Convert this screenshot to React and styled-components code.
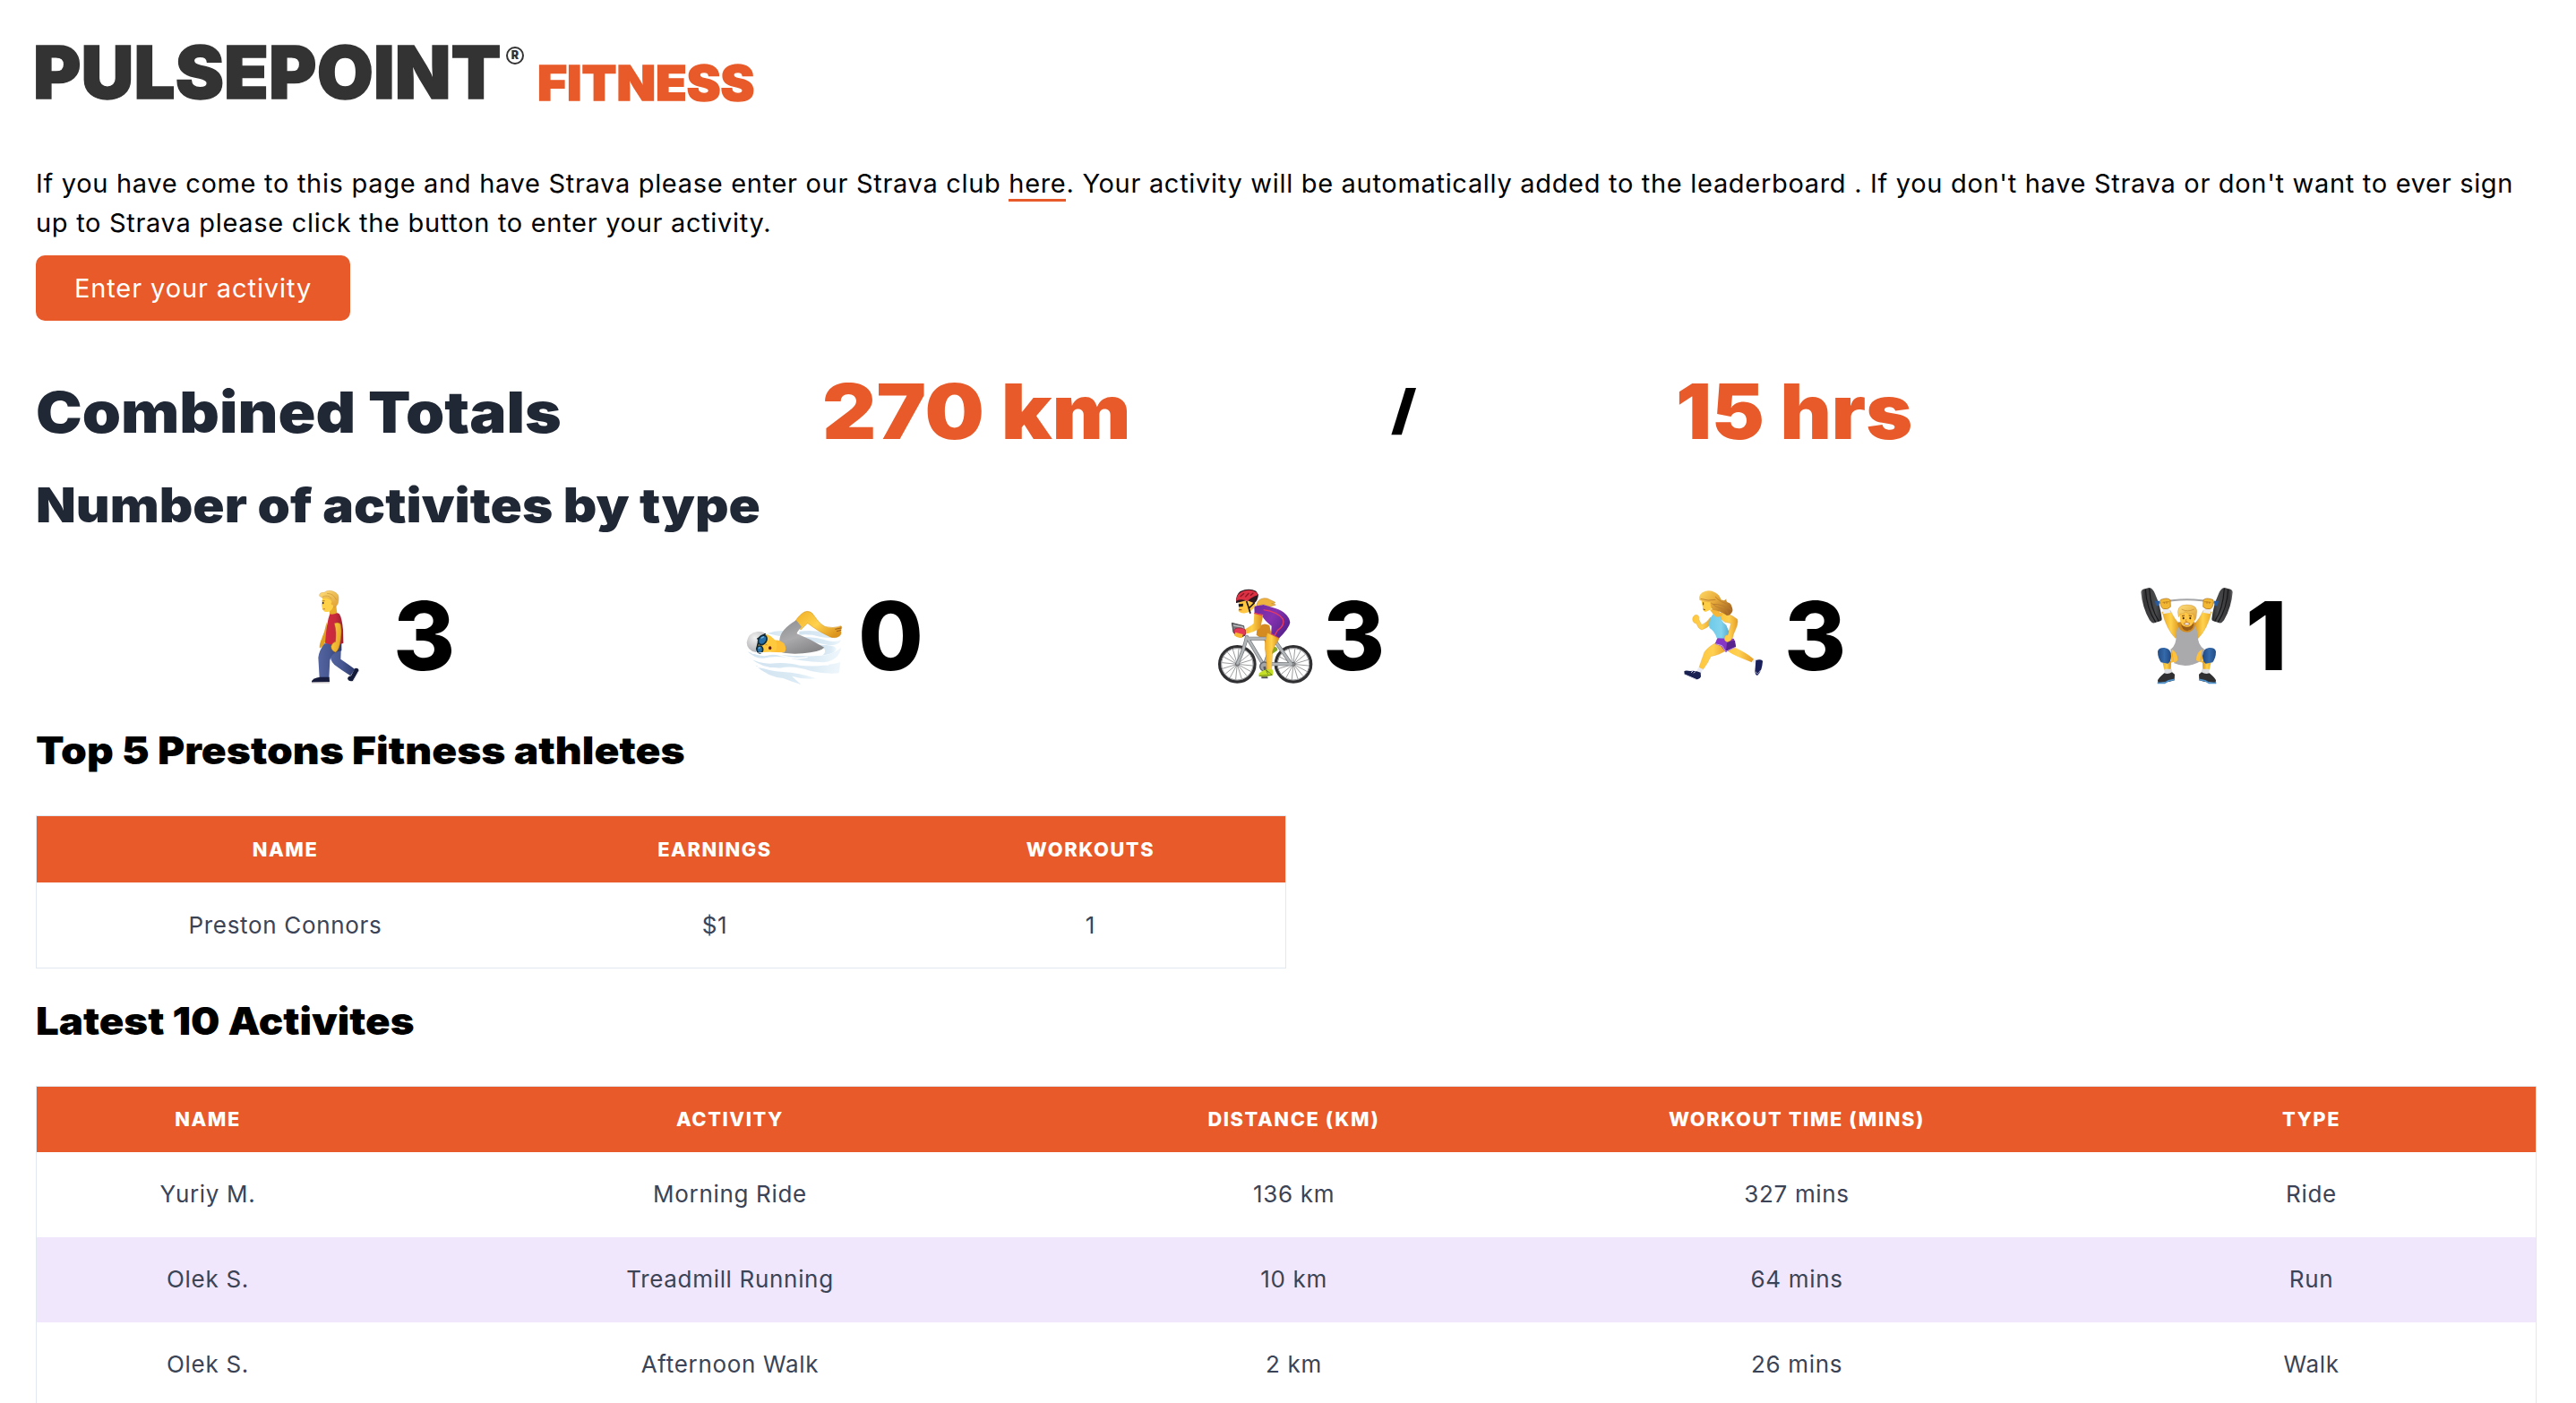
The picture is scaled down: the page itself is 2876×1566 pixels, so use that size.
import React from 'react';
import styled, { createGlobalStyle } from 'styled-components';

const orange = '#e85a29';
const navy = '#202836';

const GlobalStyle = createGlobalStyle`
  *, *::before, *::after { box-sizing: border-box; }
  html, body { margin: 0; background: #fff; }
  body { font-family: Inter, "Open Sans", sans-serif; color: #000; }
  h1, h2, h3, p { margin: 0; }
`;

const Page = styled.main`
  height: 1566px;
  overflow: hidden;
  padding: 0 44px 0 40px;
  display: flex;
  flex-direction: column;
  align-items: stretch;
`;

const Header = styled.header`
  height: 182.6px;
  padding-top: 41px;
  display: flex;
  align-items: flex-start;
  flex: none;
`;

const Brand = styled.h1`
  width: 526px;
  margin-left: -3px;
  font-size: 81.5px;
  line-height: 80px;
  font-weight: 900;
  letter-spacing: 0.1px;
  color: #333;
  white-space: nowrap;
  -webkit-text-stroke: 1.4px #333;
`;

const Registered = styled.span`
  width: 20px;
  height: 20px;
  margin: 11px 0 0 2px;
  display: flex;
  align-items: center;
  justify-content: center;
  border: 2px solid #333;
  border-radius: 50%;
  color: #333;
  font-size: 12.5px;
  line-height: 12px;
  font-weight: 900;
`;

const BrandSuffix = styled.span`
  margin: 23px 0 0 15px;
  font-size: 53px;
  line-height: 58px;
  font-weight: 900;
  color: ${orange};
  -webkit-text-stroke: 1.4px ${orange};
  transform: scaleX(1.069);
  transform-origin: left center;
`;

const Intro = styled.p`
  flex: none;
  font-size: 29px;
  line-height: 44.3px;
  letter-spacing: 0.69px;
  white-space: nowrap;
`;

const ClubLink = styled.a`
  color: inherit;
  text-decoration: none;
  box-shadow: 0 3px 0 ${orange};
`;

const ActivityButton = styled.button`
  flex: none;
  align-self: flex-start;
  width: 351px;
  height: 73px;
  margin-top: 13.8px;
  padding: 0;
  border: 0;
  border-radius: 10px;
  background: ${orange};
  color: #fff;
  font-family: inherit;
  font-size: 29px;
  letter-spacing: 0.9px;
`;

const Totals = styled.section`
  flex: none;
  height: 96px;
  margin-top: 54px;
  display: grid;
  grid-template-columns: 878px 635px 318px 1fr;
  align-items: center;
`;

const Heading = styled.h2`
  flex: none;
  align-self: ${(p) => p.$align || 'flex-start'};
  justify-self: start;
  font-size: ${(p) => p.$size}px;
  line-height: 60px;
  font-weight: 900;
  color: ${(p) => p.$color || '#000'};
  white-space: nowrap;
  transform: scaleX(${(p) => p.$stretch});
  transform-origin: left center;
`;

const TypesHeading = styled(Heading)`
  margin-top: 26.4px;
`;

const Total = styled.strong`
  justify-self: start;
  font-size: 85px;
  line-height: 96px;
  font-weight: 900;
  color: ${orange};
  white-space: nowrap;
  transform: scaleX(${(p) => p.$stretch});
  transform-origin: left center;
`;

const Slash = styled.span`
  justify-self: start;
  font-size: 60px;
  line-height: 92px;
  margin-top: -5px;
  font-weight: 900;
  transform: scaleX(1.15);
  transform-origin: left center;
`;

const Activities = styled.section`
  flex: none;
  height: 160px;
  margin-top: 35.6px;
  padding-left: 278px;
  display: grid;
  grid-template-columns: 519px 519px 515px 515px 1fr;
  align-items: center;
`;

const Activity = styled.div`
  display: flex;
  align-items: center;
  gap: 11px;
`;

const Figure = styled.svg`
  width: 110px;
  height: 110px;
  flex: none;
  overflow: visible;
`;

const Count = styled.span`
  font-size: 105.5px;
  line-height: 160px;
  font-weight: 800;
`;

const SectionHeading = styled(Heading)`
  margin-top: ${(p) => p.$top}px;
`;

const Table = styled.table`
  flex: none;
  align-self: flex-start;
  width: ${(p) => p.$width}px;
  margin-top: ${(p) => p.$top}px;
  table-layout: fixed;
  border-collapse: separate;
  border-spacing: 0;
  border: 1px solid #e2e8f0;
`;

const Col = styled.col`
  width: ${(p) => p.$w}px;
`;

const HeadCell = styled.th`
  height: ${(p) => p.$h}px;
  padding: 0;
  background: ${orange};
  color: #fff;
  font-size: 21.8px;
  line-height: 32px;
  font-weight: 800;
  letter-spacing: 1.6px;
  text-transform: uppercase;
  white-space: nowrap;
`;

const Row = styled.tr`
  background: ${(p) => (p.$striped ? '#f1e7fc' : '#fff')};
`;

const Cell = styled.td`
  height: 95px;
  padding: 0;
  color: #3b4456;
  font-size: 26px;
  line-height: 36px;
  letter-spacing: 0.68px;
  text-align: center;
  white-space: nowrap;
`;

const Walker = () => (
  <Figure viewBox="-6 72 330 330">
    <defs>
      <linearGradient id="shirt" x1="0" x2="1">
        <stop offset="0" stopColor="#d32a3f" />
        <stop offset="0.55" stopColor="#c72a3d" />
        <stop offset="1" stopColor="#9b1f30" />
      </linearGradient>
      <linearGradient id="jeans" x1="0" x2="1">
        <stop offset="0" stopColor="#5364a0" />
        <stop offset="0.5" stopColor="#465791" />
        <stop offset="1" stopColor="#2d3a6c" />
      </linearGradient>
      <linearGradient id="skin" x1="0" x2="1" y2="0.4">
        <stop offset="0" stopColor="#ffd54a" />
        <stop offset="1" stopColor="#e9a726" />
      </linearGradient>
      <linearGradient id="hair" x1="0" x2="1" y2="1">
        <stop offset="0" stopColor="#ffdf7a" />
        <stop offset="1" stopColor="#dd9e33" />
      </linearGradient>
    </defs>
    <path d="M134 190 Q128 225 114 254 Q108 270 111 278 L122 270 L136 246Z" fill="#e0a021" />
    <path d="M147 288 Q143 318 160 333 Q185 352 214 370 L229 348 Q205 330 181 314 L183 264Z" fill="url(#jeans)" />
    <path d="M204 378 Q207 371 216 370 L229 345 Q241 342 242 352 L222 387 Q207 391 204 378Z" fill="#141a3a" />
    <path d="M243 352 L222 389" stroke="#d8d8dc" strokeWidth="3" />
    <path d="M127 262 Q109 284 106 309 L110 377 L142 377 L145 318 Q150 291 184 286 L184 258Z" fill="url(#jeans)" />
    <path d="M84 388 Q87 378 112 374 L143 374 L144 391 L84 393Z" fill="#171c3c" />
    <path d="M84 393 H144" stroke="#d5cfd0" strokeWidth="4" />
    <path d="M145 162 Q160 155 176 162 Q185 174 189 216 L190 261 Q157 271 129 260 Q134 190 145 162Z" fill="url(#shirt)" />
    <path d="M160 194 Q171 189 180 196 Q186 217 181 248 Q177 284 164 291 Q149 286 149 271 Q154 258 164 256 Q168 222 160 194Z" fill="url(#skin)" stroke="#ad6d13" strokeWidth="1.5" />
    <path d="M142 140 L166 135 L169 160 Q155 166 144 163Z" fill="#e8ac2c" />
    <path d="M121 105 Q119 120 117 132 Q119 151 128 155 Q145 160 154 143 L165 120 L155 96Z" fill="#ffd149" />
    <path d="M110 103 Q108 90 126 91 Q139 80 158 88 Q177 96 174 115 Q173 137 158 142 Q157 126 149 115 Q135 105 120 109Z" fill="url(#hair)" stroke="#c88d2c" strokeWidth="1" />
    <path d="M119 106 Q138 96 151 112 M135 94 Q157 94 167 116" stroke="#bd8428" strokeWidth="1.5" fill="none" />
    <path d="M119 119 L128 119" stroke="#8a5b17" strokeWidth="2" />
    <ellipse cx="122" cy="126" rx="2.5" ry="4" fill="#3c260d" />
    <path d="M121 147 L129 146" stroke="#a4572b" strokeWidth="2" />
    <circle cx="154" cy="128" r="5" fill="#e9ac38" />
  </Figure>
);

const Swimmer = () => (
  <Figure viewBox="81 72 330 330">
    <defs>
      <linearGradient id="arm" x1="0" x2="1" y2="0.7">
        <stop offset="0" stopColor="#f0ad25" />
        <stop offset="0.55" stopColor="#ffd24d" />
        <stop offset="1" stopColor="#dc941d" />
      </linearGradient>
      <linearGradient id="suit" x1="0" x2="0.5" y2="1">
        <stop offset="0" stopColor="#8d8e91" />
        <stop offset="0.55" stopColor="#aaaaac" />
        <stop offset="1" stopColor="#88888b" />
      </linearGradient>
      <radialGradient id="cap" cx="0.4" cy="0.3" r="0.8">
        <stop offset="0" stopColor="#f1f1f2" />
        <stop offset="1" stopColor="#aaaaac" />
      </radialGradient>
      <linearGradient id="water" x1="0" x2="1">
        <stop offset="0" stopColor="#d2e4f1" />
        <stop offset="0.7" stopColor="#dcebf5" />
        <stop offset="1" stopColor="#eff7fc" />
      </linearGradient>
    </defs>
    <g fill="url(#water)">
      <path d="M140 228 Q177 215 207 221 L196 241Z" />
      <path d="M247 221 Q293 215 329 225 Q358 233 389 229 L387 239 Q351 247 316 239 Q282 229 247 233Z" />
      <path d="M251 239 Q312 240 343 253 Q374 258 388 249 Q380 270 345 267 L294 257Z" />
      <path d="M313 266 Q371 266 371 280 Q369 296 324 302 Q347 283 313 266Z" />
      <path d="M74 289 Q106 302 131 304 Q181 293 213 298 Q266 307 309 303 Q353 304 387 276 Q381 319 327 325 Q247 321 205 309 Q155 302 127 313 Q96 311 74 289Z" />
      <path d="M79 308 Q105 327 148 329 Q206 323 248 335 Q315 343 385 325 L380 361 Q336 365 286 354 Q226 333 182 344 Q124 346 79 308Z" />
      <path d="M100 335 Q143 354 193 357 Q246 359 304 379 Q265 384 222 371 L253 399 Q214 387 193 378 Q141 373 100 335Z" />
    </g>
    <path d="M89 295 Q147 289 190 303 T275 307 M86 315 Q157 309 211 318 T345 333 M105 341 Q166 345 213 349" fill="none" stroke="#fff" strokeWidth="4" />
    <path d="M231 190 Q255 155 273 154 Q288 153 297 169 Q316 197 333 205 Q359 213 387 203 Q394 209 384 217 Q392 228 381 237 Q367 247 349 239 Q308 220 275 194 L252 216Z" fill="url(#arm)" stroke="#c98b1e" strokeWidth="1.2" />
    <path d="M367 214 L387 210 M372 221 L388 217" stroke="#9e611b" strokeWidth="3" />
    <path d="M181 249 Q184 215 237 184 L255 206 Q239 222 239 229 Q287 248 331 275 Q315 290 282 295 Q225 303 176 288Z" fill="url(#suit)" />
    <path d="M153 257 Q173 242 196 262 Q206 279 198 291 L151 293Z" fill="#ffbf35" />
    <path d="M108 237 Q130 223 151 237 L169 253 Q176 275 166 288 L123 294 L104 276Z" fill="#ffc93e" />
    <path d="M71 258 Q75 226 107 222 Q129 220 139 235 L106 262 L102 291 Q72 286 71 258Z" fill="url(#cap)" />
    <path d="M106 247 L134 229 M104 282 L111 253" stroke="#101e20" strokeWidth="5" />
    <ellipse cx="124" cy="250" rx="13" ry="17" transform="rotate(35 124 250)" fill="#286ea7" stroke="#112b38" strokeWidth="5" />
    <ellipse cx="115" cy="282" rx="10" ry="12" fill="#286ea7" stroke="#112b38" strokeWidth="5" />
    <path d="M119 244 L129 239 M110 278 L116 275" stroke="#72b5dc" strokeWidth="4" />
    <ellipse cx="149" cy="277" rx="5" ry="6" fill="#65200a" />
    <path d="M133 267 Q140 263 140 268" stroke="#c77820" strokeWidth="2" fill="none" />
    <path d="M100 292 Q158 287 194 294 Q270 302 331 280 Q298 305 226 303 Q160 298 100 292Z" fill="#fff" />
  </Figure>
);

const spokes = Array.from({ length: 16 }, (_, i) => {
  const a = (i * Math.PI) / 8 + 0.1;
  return [Math.cos(a) * 51, Math.sin(a) * 51];
});

const Wheel = ({ cx, cy }) => (
  <g transform={`translate(${cx} ${cy})`}>
    <circle r="59" fill="none" stroke="#303033" strokeWidth="10" />
    <circle r="53" fill="none" stroke="#8b8c8f" strokeWidth="3" />
    {spokes.map(([x, y], i) => (
      <path key={i} d={`M0 0 L${x} ${y}`} stroke="#77787c" strokeWidth="2.2" />
    ))}
    <circle r="6" fill="#8f9093" stroke="#505155" strokeWidth="2" />
  </g>
);

const Cyclist = () => (
  <Figure viewBox="48 72 330 330">
    <defs>
      <linearGradient id="jersey" x1="0" x2="1" y2="0.7">
        <stop offset="0" stopColor="#6c299c" />
        <stop offset="0.5" stopColor="#8732b1" />
        <stop offset="1" stopColor="#54208b" />
      </linearGradient>
      <linearGradient id="leg" x1="0" x2="1">
        <stop offset="0" stopColor="#f3ad26" />
        <stop offset="0.45" stopColor="#ffd14b" />
        <stop offset="1" stopColor="#d88b18" />
      </linearGradient>
    </defs>
    <path d="M221 293 L245 272 Q260 272 259 284 L227 307Z" fill="#89aa20" />
    <Wheel cx={124} cy={331} />
    <Wheel cx={312} cy={331} />
    <path d="M190 215 Q207 187 232 201 L237 224 L221 270 L215 252 L188 233Z" fill="#d58b20" />
    <path d="M124 331 Q149 275 156 239 L214 337 L245 247 M157 245 H245 L305 331 H214" fill="none" stroke="#74777b" strokeWidth="12" strokeLinejoin="round" />
    <path d="M124 331 Q149 275 156 239 L214 337 L245 247 M157 245 H245 L305 331 H214" fill="none" stroke="#b2b5b8" strokeWidth="8" strokeLinejoin="round" />
    <circle cx="215" cy="339" r="15" fill="#a2a4a8" stroke="#606267" strokeWidth="4" />
    <path d="M215 339 L222 375 H205" fill="none" stroke="#55575b" strokeWidth="8" />
    <path d="M106 193 L111 224 Q127 248 150 235 L146 203Z" fill="#75767a" stroke="#494a4d" strokeWidth="3" />
    <path d="M111 201 L142 207 L151 231" stroke="#bbbcc0" strokeWidth="5" fill="none" />
    <path d="M189 130 Q197 106 225 111 Q243 120 251 124 Q252 128 239 128 L253 132 Q232 142 216 132 Q204 128 189 143Z" fill="#efb440" stroke="#b9771d" strokeWidth="1.5" />
    <path d="M181 137 L212 132 L252 144 Q296 159 301 191 Q299 210 260 248 L237 236 L239 203 Q216 187 207 169 L182 164Z" fill="url(#jersey)" />
    <path d="M212 149 Q260 156 277 180 Q285 200 259 218 L249 235" stroke="#e73a60" strokeWidth="4" fill="none" />
    <path d="M181 159 Q192 164 211 165 L202 209 Q180 225 146 230 L142 218 Q167 205 179 194Z" fill="url(#leg)" />
    <path d="M114 227 Q111 217 119 211 Q139 207 151 216 L152 231 L137 239Z" fill="#e63756" stroke="#8d1b31" strokeWidth="2" />
    <path d="M114 235 Q127 246 140 242 L143 231 L118 224Z" fill="#f6b735" />
    <path d="M181 160 L208 167 M235 228 L262 244" stroke="#e73a60" strokeWidth="4" />
    <path d="M225 226 L265 245 Q249 267 242 287 L239 351 L223 350 Q223 309 217 279 Q216 248 225 226Z" fill="url(#leg)" stroke="#c08019" strokeWidth="1" />
    <path d="M196 364 Q201 355 222 349 L241 348 Q249 360 240 369 Q216 375 197 371Z" fill="#c5df27" />
    <path d="M197 370 L241 367 L220 350 L227 364" fill="none" stroke="#6d861c" strokeWidth="3" />
    <path d="M129 121 Q130 138 128 154 Q138 163 151 160 Q176 156 185 132 L164 112Z" fill="#ffc743" />
    <path d="M128 130 L144 128 L143 138 L129 139Z" fill="#1c1c1f" />
    <path d="M155 120 L161 137 L168 161 M182 125 L163 144" stroke="#211b1d" strokeWidth="5" fill="none" />
    <path d="M120 126 Q118 99 134 87 Q163 74 187 86 L195 98 Q193 118 181 127 L156 117 L122 126Z" fill="#2d1a20" />
    <path d="M120 119 Q121 94 145 86 Q172 78 188 91 L194 99 Q168 108 159 120 Q138 110 120 119Z" fill="#dc3043" />
    <path d="M134 105 L147 94 M151 106 L163 93 M168 101 L178 92" stroke="#851725" strokeWidth="4" />
    <path d="M129 149 L139 149" stroke="#944121" strokeWidth="3" />
  </Figure>
);

const Runner = () => (
  <Figure viewBox="33 72 330 330">
    <defs>
      <linearGradient id="runskin" x1="0" x2="1">
        <stop offset="0" stopColor="#ffc73a" />
        <stop offset="0.5" stopColor="#ffd052" />
        <stop offset="1" stopColor="#e69e25" />
      </linearGradient>
      <linearGradient id="runhair" x1="0" x2="1" y2="0.7">
        <stop offset="0" stopColor="#ffd966" />
        <stop offset="0.5" stopColor="#e7aa3a" />
        <stop offset="1" stopColor="#a96a24" />
      </linearGradient>
      <linearGradient id="top" x1="0" x2="1">
        <stop offset="0" stopColor="#6dc9ea" />
        <stop offset="0.6" stopColor="#83d4ed" />
        <stop offset="1" stopColor="#58acd1" />
      </linearGradient>
    </defs>
    <path d="M149 174 Q136 194 119 199 L110 181 Q113 169 103 166 Q91 166 89 180 Q90 194 102 195 Q108 213 120 216 Q139 211 154 193Z" fill="url(#runskin)" stroke="#d3962d" strokeWidth="1" />
    <path d="M195 270 Q205 292 241 306 L287 325 L294 314 Q269 293 234 277Z" fill="url(#runskin)" />
    <path d="M288 321 L300 313 L308 320 L302 335Z" fill="#eef0f5" />
    <path d="M301 318 Q316 313 324 320 Q322 354 307 368 Q299 370 298 354Z" fill="#1a205a" />
    <path d="M301 356 Q304 372 317 351" stroke="#dddfe7" strokeWidth="2" fill="none" />
    <path d="M169 258 Q142 272 129 290 Q120 315 111 341 L124 349 Q140 328 150 305 Q176 302 205 283Z" fill="url(#runskin)" stroke="#dca132" strokeWidth="1" />
    <path d="M108 342 L123 347 L118 363 L103 356Z" fill="#e9ecf4" />
    <path d="M61 355 Q64 351 81 354 Q100 352 116 359 L117 373 Q112 386 97 380 L62 365Z" fill="#192052" />
    <path d="M84 359 L90 354 M93 361 L99 355 M61 365 L101 382" stroke="#d9dce8" strokeWidth="3" />
    <path d="M172 244 Q194 237 228 246 L234 273 L200 291 L184 270 L164 263Z" fill="#8536c5" />
    <path d="M205 255 L231 252 L234 272 L200 291Z" fill="#59238e" />
    <path d="M166 263 L188 269 L200 289 L231 275" fill="none" stroke="#c5a4e9" strokeWidth="3" />
    <path d="M151 173 L158 163 Q168 170 178 156 L187 166 Q181 188 202 200 L212 225 Q211 240 202 245 L170 244 Q163 220 146 210 Q141 190 151 173Z" fill="url(#top)" />
    <path d="M184 157 Q215 161 239 181 Q244 194 226 231 Q224 252 206 257 Q193 254 196 240 Q202 231 207 233 L218 194 L197 190 Q178 180 184 157Z" fill="url(#runskin)" stroke="#c68924" strokeWidth="1" />
    <path d="M147 149 L173 142 Q175 159 192 164 Q170 183 157 162Z" fill="#f6b638" />
    <path d="M119 120 L123 141 Q124 154 132 156 L151 148 L160 123 L138 109Z" fill="#ffce47" />
    <path d="M112 116 Q108 101 122 91 Q144 78 164 91 Q180 99 184 115 Q198 121 202 112 Q200 124 213 126 Q224 139 223 153 Q217 168 204 168 Q180 151 157 149 Q149 142 148 123 Q131 126 112 116Z" fill="url(#runhair)" />
    <path d="M116 112 Q142 121 166 115 M151 126 Q167 141 193 147 Q211 154 207 166 M165 105 Q183 126 219 133 M159 130 Q188 130 220 149" fill="none" stroke="#b87c2c" strokeWidth="2.5" />
    <path d="M125 124 V133 M125 147 L131 149" stroke="#633914" strokeWidth="3" />
  </Figure>
);

const Lifter = () => (
  <Figure viewBox="48 72 330 330">
    <defs>
      <linearGradient id="plate" x1="0" x2="1">
        <stop offset="0" stopColor="#6a6b6d" />
        <stop offset="0.15" stopColor="#353537" />
        <stop offset="0.7" stopColor="#4a4b4d" />
        <stop offset="1" stopColor="#2a2a2c" />
      </linearGradient>
      <linearGradient id="lifterskin" x1="0" x2="1">
        <stop offset="0" stopColor="#ecaa26" />
        <stop offset="0.5" stopColor="#ffd24c" />
        <stop offset="1" stopColor="#dc951d" />
      </linearGradient>
      <linearGradient id="lifterhair" x1="0" x2="1" y2="1">
        <stop offset="0" stopColor="#ffdf79" />
        <stop offset="1" stopColor="#dfa139" />
      </linearGradient>
      <linearGradient id="pad" x1="0" x2="1">
        <stop offset="0" stopColor="#234d86" />
        <stop offset="0.5" stopColor="#3469aa" />
        <stop offset="1" stopColor="#214881" />
      </linearGradient>
    </defs>
    <path d="M116 127 Q215 103 315 127" stroke="#a4a5a7" strokeWidth="6" fill="none" />
    {[false, true].map((flip) => (
      <g key={String(flip)} transform={flip ? 'translate(429 0) scale(-1 1)' : undefined}>
        <path d="M61 90 Q61 82 68 80 L88 75 Q99 74 108 95 Q126 135 131 180 Q131 186 125 187 L106 193 Q98 195 90 184 Q65 140 61 90Z" fill="url(#plate)" />
        <path d="M76 81 Q80 145 110 190 M89 78 Q93 146 121 187" stroke="#161618" strokeWidth="3.5" fill="none" />
        <path d="M108 119 L123 119 L121 136 L112 136Z" fill="#245da6" />
        <path d="M132 156 L159 151 Q172 180 190 197 L187 235 L176 244 Q146 213 132 156Z" fill="url(#lifterskin)" stroke="#c98920" strokeWidth="1" />
        <path d="M133 149 L157 146 L160 158 L136 163Z" fill="#ececef" />
        <path d="M125 121 Q125 113 134 113 Q151 108 159 116 L160 139 Q151 149 136 146 Q126 141 125 121Z" fill="#f1b733" stroke="#a66916" strokeWidth="2" />
        <path d="M133 124 L156 122 M139 129 V123 M147 129 V121" stroke="#ac701b" strokeWidth="2" />
        <path d="M160 280 Q178 282 186 300 Q185 323 161 326Z" fill="#ffbb34" />
        <path d="M132 319 L162 320 L161 350 L139 350Z" fill="url(#lifterskin)" />
        <path d="M139 347 L164 347 L167 363 L140 363Z" fill="#dedfe3" />
        <path d="M117 289 Q119 275 140 276 Q162 279 162 304 Q161 325 151 329 L128 325 Q117 309 117 289Z" fill="url(#pad)" />
        <path d="M117 385 Q119 378 139 361 Q152 366 165 358 L174 365 L173 385 L158 389 L118 394Z" fill="#303033" />
        <path d="M116 394 H140 L154 386 L174 382" stroke="#4b91ce" strokeWidth="5" fill="none" />
      </g>
    ))}
    <path d="M187 188 Q213 208 240 188 L252 235 Q250 267 273 281 L261 321 Q215 347 172 328 L161 281 Q181 265 178 234Z" fill="#aaaaad" />
    <path d="M164 281 Q184 290 184 318 L172 328Z M266 281 Q246 290 246 318 L258 324Z" fill="#ffc03a" />
    <path d="M183 194 Q188 223 214 224 Q239 224 245 194 L235 188 L195 188Z" fill="#d18b20" />
    <path d="M192 162 Q190 186 197 202 Q206 219 217 219 Q234 217 239 193 L240 156 Q212 140 192 162Z" fill="#ffc744" />
    <path d="M194 190 Q198 206 214 206 Q232 206 238 188 Q240 216 216 220 Q197 219 194 190Z" fill="#9b5e18" />
    <path d="M187 173 Q176 132 214 132 Q254 131 247 164 Q247 179 240 185 L237 163 Q221 166 209 155 Q205 165 194 162Z" fill="url(#lifterhair)" stroke="#bb812b" strokeWidth="1" />
    <path d="M197 147 Q217 158 239 147" stroke="#c4882a" strokeWidth="2" fill="none" />
    <path d="M198 170 L207 168 M221 168 L231 170" stroke="#7d4814" strokeWidth="3" />
    <ellipse cx="203" cy="177" rx="3" ry="4" fill="#3a240f" />
    <ellipse cx="226" cy="177" rx="3" ry="4" fill="#3a240f" />
    <path d="M213 180 L210 188 H217" stroke="#c67f25" strokeWidth="2" fill="none" />
    <path d="M205 194 Q214 190 224 194 L221 200 H208Z" fill="#fff" stroke="#9f5223" strokeWidth="2" />
  </Figure>
);

const activityTypes = [
  { name: 'walk', icon: Walker, count: 3 },
  { name: 'swim', icon: Swimmer, count: 0 },
  { name: 'ride', icon: Cyclist, count: 3 },
  { name: 'run', icon: Runner, count: 3 },
  { name: 'workout', icon: Lifter, count: 1 },
];

const latest = [
  ['Yuriy M.', 'Morning Ride', '136 km', '327 mins', 'Ride'],
  ['Olek S.', 'Treadmill Running', '10 km', '64 mins', 'Run'],
  ['Olek S.', 'Afternoon Walk', '2 km', '26 mins', 'Walk'],
];

const DataTable = ({ width, top, headHeight, columns, heads, rows }) => (
  <Table $width={width} $top={top}>
    <colgroup>
      {columns.map((w, i) => (
        <Col key={i} $w={w} />
      ))}
    </colgroup>
    <thead>
      <tr>
        {heads.map((h) => (
          <HeadCell key={h} $h={headHeight}>
            {h}
          </HeadCell>
        ))}
      </tr>
    </thead>
    <tbody>
      {rows.map((r, i) => (
        <Row key={i} $striped={i % 2 === 1}>
          {r.map((c, j) => (
            <Cell key={j}>{c}</Cell>
          ))}
        </Row>
      ))}
    </tbody>
  </Table>
);

export default function App() {
  return (
    <Page>
      <GlobalStyle />
      <Header>
        <Brand>PULSEPOINT</Brand>
        <Registered>R</Registered>
        <BrandSuffix>FITNESS</BrandSuffix>
      </Header>
      <Intro>
        If you have come to this page and have Strava please enter our Strava club <ClubLink>here</ClubLink>. Your
        activity will be automatically added to the leaderboard . If you don't have Strava or don't want to ever sign
        <br />
        up to Strava please click the button to enter your activity.
      </Intro>
      <ActivityButton>Enter your activity</ActivityButton>
      <Totals>
        <Heading $size={63.4} $color={navy} $align="center" $stretch={1.092}>
          Combined Totals
        </Heading>
        <Total $stretch={1.1}>270 km</Total>
        <Slash>/</Slash>
        <Total $stretch={1.04}>15 hrs</Total>
      </Totals>
      <TypesHeading $size={53} $color={navy} $stretch={1.1}>
        Number of activites by type
      </TypesHeading>
      <Activities>
        {activityTypes.map(({ name, icon: Icon, count }) => (
          <Activity key={name}>
            <Icon />
            <Count>{count}</Count>
          </Activity>
        ))}
      </Activities>
      <SectionHeading $size={42.6} $top={18.4} $stretch={1.084}>
        Top 5 Prestons Fitness athletes
      </SectionHeading>
      <DataTable
        width={1396}
        top={41.8}
        headHeight={74}
        columns={[555, 404, 435]}
        heads={['Name', 'Earnings', 'Workouts']}
        rows={[['Preston Connors', '$1', '1']]}
      />
      <SectionHeading $size={42.6} $top={28.4} $stretch={1.07}>
        Latest 10 Activites
      </SectionHeading>
      <DataTable
        width={2792}
        top={42.4}
        headHeight={73}
        columns={[382, 784, 475, 648, 501]}
        heads={['Name', 'Activity', 'Distance (km)', 'Workout time (mins)', 'Type']}
        rows={latest}
      />
    </Page>
  );
}
